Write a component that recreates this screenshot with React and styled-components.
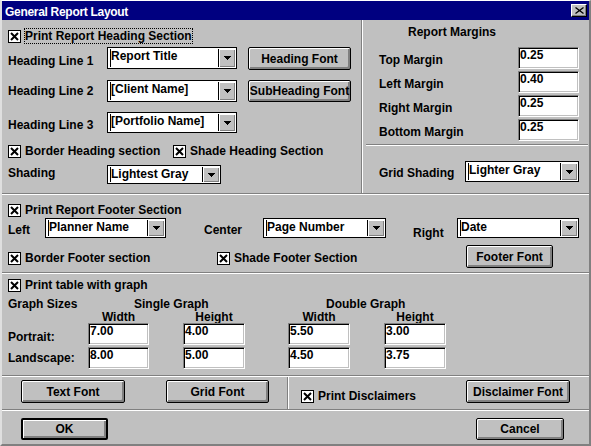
import React from 'react';
import styled, { createGlobalStyle } from 'styled-components';

const GlobalStyle = createGlobalStyle`
  html, body {
    margin: 0;
    padding: 0;
    background: #c0c0c0;
  }
  * {
    box-sizing: border-box;
  }
`;

const FONT = '"Liberation Sans", Arial, sans-serif';

// window frame

const Window = styled.div`
  width: 591px;
  height: 446px;
  display: flex;
  flex-direction: column;
  background: #c0c0c0;
  border-top: 1px solid #fff;
  border-left: 2px solid #dfdfdf;
  border-right: 2px solid #808080;
  border-bottom: 2px solid #808080;
  font: bold 12px ${FONT};
  color: #000;
  overflow: hidden;
`;

const TitleBar = styled.div`
  flex: none;
  height: 19px;
  display: flex;
  align-items: center;
  padding: 0 2px 0 3px;
  background: #000080;
  color: #fff;
`;

const Title = styled.span`
  flex: 1;
  margin-top: 2px;
  line-height: 14px;
  letter-spacing: -0.3px;
  white-space: nowrap;
`;

const CloseBox = styled.div`
  width: 16px;
  height: 13px;
  display: flex;
  align-items: center;
  justify-content: center;
  background: #c0c0c0;
  border: 1px solid;
  border-color: #fff #000 #000 #fff;
  box-shadow: inset -1px -1px #808080;
`;

// sections

const Section = styled.div`
  flex: none;
  height: ${p => p.$h}px;
  display: flex;
`;

const Panel = styled.div`
  flex: ${p => (p.$w ? 'none' : '1')};
  width: ${p => (p.$w ? `${p.$w}px` : 'auto')};
  display: flex;
  flex-direction: column;
  padding-left: ${p => p.$pl || 0}px;
  padding-right: ${p => p.$pr || 0}px;
`;

const Row = styled.div`
  flex: none;
  display: flex;
  align-items: flex-start;
  justify-content: ${p => p.$justify || 'flex-start'};
  height: ${p => p.$h}px;
  margin-top: ${p => p.$mt || 0}px;
`;

const Etch = styled.div`
  flex: none;
  height: 2px;
  margin: ${p => p.$m || 0};
  border-top: 1px solid #808080;
  border-bottom: 1px solid #fff;
`;

const VEtch = styled.div`
  flex: none;
  width: 2px;
  border-left: 1px solid #808080;
  border-right: 1px solid #fff;
`;

const Label = styled.span`
  flex: none;
  width: ${p => (p.$w ? `${p.$w}px` : 'auto')};
  margin-left: ${p => p.$ml || 0}px;
  margin-top: ${p => p.$dy || 0}px;
  line-height: 14px;
  white-space: nowrap;
`;

// controls

const PushButton = styled.button`
  flex: none;
  width: ${p => p.$w}px;
  height: ${p => p.$h || 23}px;
  margin: 0 0 0 ${p => p.$ml || 0}px;
  margin-top: ${p => p.$mt || 0}px;
  padding: 0;
  background: #c0c0c0;
  border: ${p => (p.$default ? 2 : 1)}px solid #000;
  border-radius: 2px;
  box-shadow: inset 1px 1px #fff, inset -1px -1px #808080, inset -2px -2px #808080;
  font: inherit;
  line-height: 14px;
  color: #000;
  white-space: nowrap;
`;

const Field = styled.input.attrs({ type: 'text', readOnly: true })`
  flex: none;
  grid-column: ${p => p.$col || 'auto'};
  grid-row: ${p => p.$row || 'auto'};
  width: ${p => p.$w}px;
  height: 22px;
  margin: 0;
  padding: 0 0 6px 1px;
  background: #fff;
  border: 1px solid;
  border-color: #808080 #fff #fff #808080;
  border-radius: 0;
  box-shadow: inset 1px 1px #000, inset -1px -1px #c0c0c0;
  font: inherit;
  color: #000;
  outline: none;
`;

const ComboBox = styled.div`
  flex: none;
  width: ${p => p.$w}px;
  height: ${p => p.$h}px;
  display: flex;
  padding: 1px 1px 1px 2px;
  background: #fff;
  border: 1px solid #000;
`;

const ComboValue = styled.div`
  flex: 1;
  min-width: 0;
  border-left: 1px solid #000;
  line-height: 14px;
  white-space: nowrap;
  overflow: hidden;
`;

const ComboButton = styled.div`
  flex: none;
  width: 17px;
  display: flex;
  align-items: center;
  justify-content: center;
  background: #c0c0c0;
  border-left: 1px solid #000;
  box-shadow: inset 1px 1px #fff, inset -1px -1px #808080;
`;

const CheckWrap = styled.div`
  flex: none;
  display: flex;
  align-items: center;
  width: ${p => (p.$w ? `${p.$w}px` : 'auto')};
  height: 16px;
  margin-top: ${p => p.$dy || 0}px;
`;

const CheckText = styled.span`
  margin-left: 3px;
  border: 1px ${p => (p.$focus ? 'dotted #000' : 'solid transparent')};
  line-height: 14px;
  white-space: nowrap;
`;

const SizeGrid = styled.div`
  display: grid;
  grid-template-columns: 80px 61px 34px 62px 43px 62px 34px 62px;
  grid-template-rows: 13px 13px 24px 22px;
  margin-top: 4px;
`;

const GridLabel = styled(Label)`
  grid-column: ${p => p.$col};
  grid-row: ${p => p.$row};
  justify-self: ${p => (p.$center ? 'center' : 'start')};
`;

const DownArrow = () => (
  <svg width="7" height="4" viewBox="0 0 7 4" shapeRendering="crispEdges">
    <rect x="0" y="0" width="7" height="1" />
    <rect x="1" y="1" width="5" height="1" />
    <rect x="2" y="2" width="3" height="1" />
    <rect x="3" y="3" width="1" height="1" />
  </svg>
);

const Combo = ({ value, w, h }) => (
  <ComboBox $w={w} $h={h}>
    <ComboValue>{value}</ComboValue>
    <ComboButton>
      <DownArrow />
    </ComboButton>
  </ComboBox>
);

const Check = ({ children, focus, w, dy }) => (
  <CheckWrap $w={w} $dy={dy}>
    <svg width="13" height="13" viewBox="0 0 13 13">
      <rect x="0.5" y="0.5" width="12" height="12" fill="#fff" stroke="#000" />
      <path d="M3 3L10 10M10 3L3 10" stroke="#000" strokeWidth="2" />
    </svg>
    <CheckText $focus={focus}>{children}</CheckText>
  </CheckWrap>
);

const margins = [
  { label: 'Top Margin', value: '0.25' },
  { label: 'Left Margin', value: '0.40' },
  { label: 'Right Margin', value: '0.25' },
  { label: 'Bottom Margin', value: '0.25' },
];

export default function App() {
  return (
    <>
      <GlobalStyle />
      <Window>
        <TitleBar>
          <Title>General Report Layout</Title>
          <CloseBox>
            <svg width="9" height="7" viewBox="0 0 9 7">
              <path d="M0.5 0.5L8.5 6.5M8.5 0.5L0.5 6.5" stroke="#000" strokeWidth="1.3" />
            </svg>
          </CloseBox>
        </TitleBar>

        {/* heading + margins */}
        <Section $h={173}>
          <Panel $w={359} $pl={6}>
            <Row $h={16} $mt={8}>
              <Check focus>Print Report Heading Section</Check>
            </Row>
            <Row $h={23} $mt={3}>
              <Label $w={99} $dy={7}>Heading Line 1</Label>
              <Combo w={130} h={22} value="Report Title" />
              <PushButton $w={103} $h={23} $ml={11}>Heading Font</PushButton>
            </Row>
            <Row $h={22} $mt={10}>
              <Label $w={99} $dy={4}>Heading Line 2</Label>
              <Combo w={130} h={22} value="[Client Name]" />
              <PushButton $w={103} $h={22} $ml={11}>SubHeading Font</PushButton>
            </Row>
            <Row $h={21} $mt={10}>
              <Label $w={99} $dy={6}>Heading Line 3</Label>
              <Combo w={130} h={21} value="[Portfolio Name]" />
            </Row>
            <Row $h={16} $mt={10}>
              <Check w={165}>Border Heading section</Check>
              <Check>Shade Heading Section</Check>
            </Row>
            <Row $h={19} $mt={6}>
              <Label $w={99} $dy={1}>Shading</Label>
              <Combo w={114} h={19} value="Lightest Gray" />
            </Row>
          </Panel>
          <VEtch />
          <Panel>
            <Row $h={14} $mt={5}>
              <Label $ml={45}>Report Margins</Label>
            </Row>
            {margins.map((m, i) => (
              <Row key={m.label} $h={22} $mt={i === 0 ? 8 : 2}>
                <Label $ml={16} $w={139} $dy={6}>{m.label}</Label>
                <Field $w={61} defaultValue={m.value} />
              </Row>
            ))}
            <Etch $m="3px 1px 0 3px" />
            <Row $h={21} $mt={15}>
              <Label $ml={16} $w={86} $dy={5}>Grid Shading</Label>
              <Combo w={114} h={21} value="Lighter Gray" />
            </Row>
          </Panel>
        </Section>
        <Etch />

        {/* footer */}
        <Section $h={77}>
          <Panel $pl={6}>
            <Row $h={16} $mt={7}>
              <Check>Print Report Footer Section</Check>
            </Row>
            <Row $h={20}>
              <Label $w={37} $dy={5}>Left</Label>
              <Combo w={121} h={20} value="Planner Name" />
              <Label $ml={38} $w={59} $dy={5}>Center</Label>
              <Combo w={123} h={20} value="Page Number" />
              <Label $ml={27} $w={44} $dy={8}>Right</Label>
              <Combo w={122} h={20} value="Date" />
            </Row>
            <Row $h={23} $mt={7}>
              <Check w={209} dy={5}>Border Footer section</Check>
              <Check w={249} dy={5}>Shade Footer Section</Check>
              <PushButton $w={87}>Footer Font</PushButton>
            </Row>
          </Panel>
        </Section>
        <Etch />

        {/* graph sizes */}
        <Section $h={101}>
          <Panel $pl={6}>
            <Row $h={16} $mt={3}>
              <Check>Print table with graph</Check>
            </Row>
            <SizeGrid>
              <GridLabel $col="1" $row="1">Graph Sizes</GridLabel>
              <GridLabel $col="2 / span 3" $row="1" $ml={46}>Single Graph</GridLabel>
              <GridLabel $col="6 / span 3" $row="1" $ml={38}>Double Graph</GridLabel>
              <GridLabel $col="2" $row="2" $center>Width</GridLabel>
              <GridLabel $col="4" $row="2" $center>Height</GridLabel>
              <GridLabel $col="6" $row="2" $center>Width</GridLabel>
              <GridLabel $col="8" $row="2" $center>Height</GridLabel>

              <GridLabel $col="1" $row="3" $dy={7}>Portrait:</GridLabel>
              <Field $col="2" $row="3" $w={61} defaultValue="7.00" />
              <Field $col="4" $row="3" $w={62} defaultValue="4.00" />
              <Field $col="6" $row="3" $w={62} defaultValue="5.50" />
              <Field $col="8" $row="3" $w={62} defaultValue="3.00" />

              <GridLabel $col="1" $row="4" $dy={4}>Landscape:</GridLabel>
              <Field $col="2" $row="4" $w={61} defaultValue="8.00" />
              <Field $col="4" $row="4" $w={62} defaultValue="5.00" />
              <Field $col="6" $row="4" $w={62} defaultValue="4.50" />
              <Field $col="8" $row="4" $w={62} defaultValue="3.75" />
            </SizeGrid>
          </Panel>
        </Section>
        <Etch />

        {/* fonts + disclaimers */}
        <Section $h={32}>
          <Panel $w={285} $pl={19}>
            <Row $h={23} $mt={3}>
              <PushButton $w={104}>Text Font</PushButton>
              <PushButton $w={103} $ml={41}>Grid Font</PushButton>
            </Row>
          </Panel>
          <VEtch />
          <Panel $pl={12}>
            <Row $h={23} $mt={3}>
              <Check w={165} dy={8}>Print Disclaimers</Check>
              <PushButton $w={104}>Disclaimer Font</PushButton>
            </Row>
          </Panel>
        </Section>
        <Etch />

        {/* dialog buttons */}
        <Section $h={33}>
          <Panel $pl={19} $pr={25}>
            <Row $h={22} $mt={7} $justify="space-between">
              <PushButton $w={87} $h={22} $default>OK</PushButton>
              <PushButton $w={88} $h={22}>Cancel</PushButton>
            </Row>
          </Panel>
        </Section>
      </Window>
    </>
  );
}
